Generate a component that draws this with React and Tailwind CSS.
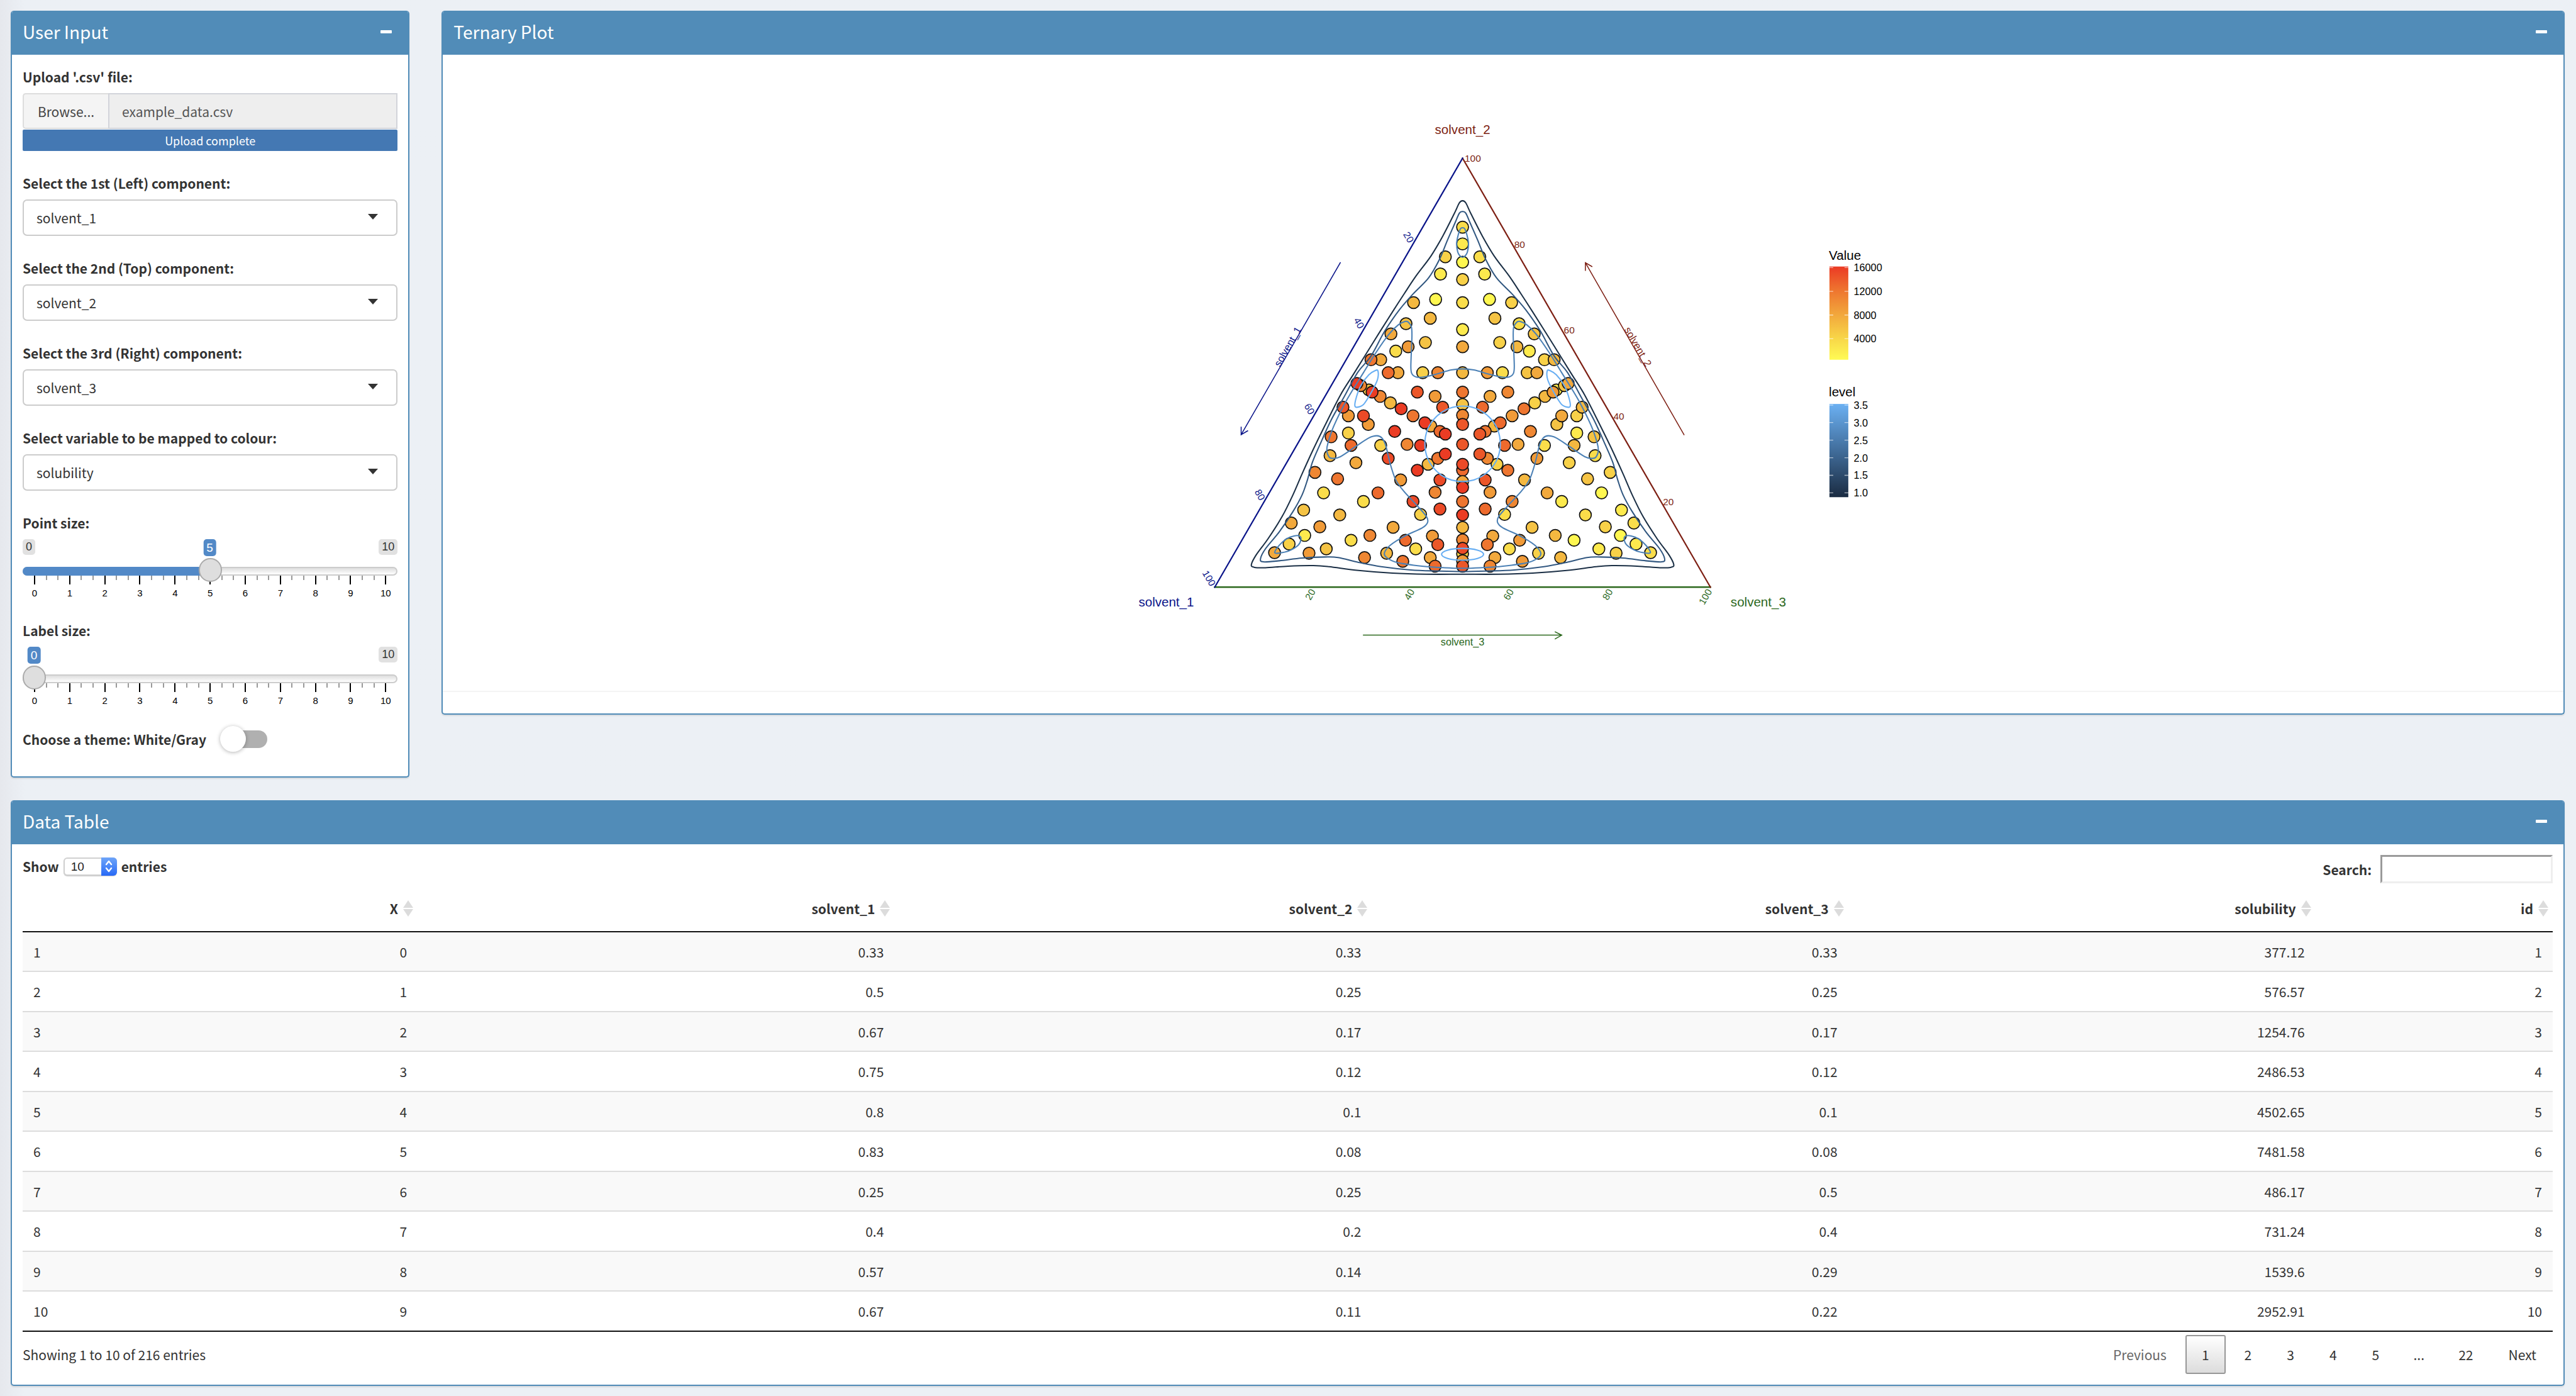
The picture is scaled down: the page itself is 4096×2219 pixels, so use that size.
import React, { useState } from "react";

/* ---------- Ternary plot data ---------- */

const PALETTE = {
  0: "#fff750", 1: "#fdea4d", 2: "#fadd4a", 3: "#f8d148", 4: "#f5c344",
  5: "#f4b840", 6: "#f2a93d", 7: "#f19b38", 8: "#ef8733", 9: "#ee7630",
  A: "#ed6a2d", B: "#ec5729", C: "#ec4a27", D: "#eb3c24",
};

// [y, colour] on the vertical symmetry axis, in drawing order
const AXIS_POINTS = [
  [422, "2"], [453, "1"], [487, "0"], [519, "3"], [562, "2"], [612, "1"],
  [644, "6"], [692, "5"], [728, "9"], [751, "4"], [771, "8"], [788, "B"],
  [825, "B"], [873, "A"], [894, "6"], [862, "C"], [905, "D"], [931, "9"],
  [956, "D"], [979, "5"], [1002, "8"], [1028, "3"], [1018, "C"],
  [1041, "7"], [1051, "B"],
];

// [distance from axis, y, colour on the left, colour on the right]
const PAIRED_POINTS = [
  [32, 477, "3", "2"], [41, 509, "1", "1"], [50, 556, "0", "0"],
  [91, 562, "5", "3"], [60, 591, "5", "4"], [105, 601, "4", "2"],
  [133, 620, "6", "4"], [101, 644, "7", "5"], [124, 652, "2", "1"],
  [69, 636, "4", "3"], [152, 668, "6", "3"], [170, 668, "9", "5"],
  [120, 692, "6", "4"], [138, 692, "A", "6"], [74, 692, "3", "2"],
  [46, 692, "8", "7"], [84, 728, "B", "8"], [51, 736, "7", "6"],
  [37, 756, "B", "A"], [174, 724, "4", "1"], [189, 716, "8", "4"],
  [196, 712, "D", "6"], [153, 736, "8", "5"], [168, 728, "D", "7"],
  [134, 748, "5", "3"], [114, 759, "D", "9"], [92, 772, "9", "7"],
  [59, 791, "6", "5"], [70, 785, "D", "A"], [42, 801, "A", "9"],
  [32, 806, "D", "B"], [212, 772, "7", "3"], [222, 756, "B", "5"],
  [175, 788, "7", "4"], [184, 772, "C", "6"], [126, 801, "D", "8"],
  [212, 804, "3", "1"], [244, 811, "9", "4"], [207, 827, "A", "5"],
  [152, 827, "3", "2"], [103, 825, "8", "6"], [78, 827, "D", "A"],
  [246, 846, "5", "2"], [198, 859, "6", "3"], [138, 851, "C", "7"],
  [64, 862, "5", "3"], [46, 851, "9", "8"], [32, 843, "D", "B"],
  [84, 873, "D", "9"], [274, 877, "8", "3"], [232, 889, "9", "4"],
  [115, 891, "7", "5"], [42, 891, "C", "B"], [258, 915, "2", "0"],
  [157, 915, "A", "6"], [51, 914, "8", "7"], [184, 931, "2", "1"],
  [92, 931, "C", "8"], [42, 945, "C", "A"], [295, 947, "4", "1"],
  [228, 956, "5", "2"], [78, 955, "3", "2"], [318, 971, "6", "2"],
  [265, 978, "7", "3"], [129, 979, "6", "4"], [293, 994, "1", "0"],
  [172, 994, "8", "5"], [56, 995, "7", "6"], [46, 1011, "B", "9"],
  [207, 1003, "2", "0"], [106, 1003, "A", "7"], [322, 1010, "3", "1"],
  [349, 1026, "6", "2"], [285, 1027, "7", "3"], [253, 1019, "4", "1"],
  [87, 1019, "2", "2"], [141, 1027, "5", "3"], [182, 1035, "8", "5"],
  [111, 1042, "9", "7"], [60, 1035, "6", "6"], [51, 1051, "A", "8"],
];

// Left halves of the symmetric density contours, top to bottom
const OUTER = [
  [0, 373], [-6, 377], [-16, 398], [-37, 439], [-59, 476], [-86, 512],
  [-108, 545], [-130, 579], [-166, 636], [-202, 694], [-227, 734],
  [-256, 791], [-277, 834], [-298, 880], [-315, 919], [-335, 959],
  [-361, 1000], [-383, 1030], [-392, 1048], [-387, 1053], [-366, 1054],
  [-324, 1051], [-277, 1050], [-248, 1052], [-193, 1059], [-130, 1064],
  [-67, 1066], [0, 1066],
];
const MIDDLE = [
  [0, 393], [-6, 396], [-14, 414], [-28, 446], [-43, 482], [-63, 516],
  [-92, 546], [-117, 575], [-144, 614], [-170, 661], [-195, 692],
  [-220, 737], [-244, 780], [-265, 826], [-279, 859], [-288, 891],
  [-298, 919], [-315, 950], [-340, 987], [-366, 1019], [-375, 1037],
  [-370, 1043], [-340, 1041], [-298, 1036], [-256, 1034], [-231, 1035],
  [-193, 1044], [-151, 1052], [-96, 1058], [-46, 1060], [0, 1061],
];
const INNER = [
  [0, 685], [-21, 687], [-50, 695], [-72, 700], [-86, 700], [-94, 694],
  [-96, 680], [-94, 625], [-95, 607], [-101, 598], [-107, 597],
  [-119, 603], [-137, 621], [-161, 655], [-184, 692], [-214, 741],
  [-239, 791], [-250, 823], [-252, 837], [-248, 848], [-242, 851],
  [-227, 848], [-197, 828], [-174, 813], [-159, 809], [-150, 813],
  [-143, 826], [-134, 862], [-124, 891], [-109, 912], [-84, 939],
  [-67, 959], [-65, 970], [-75, 980], [-109, 996], [-134, 1012],
  [-145, 1026], [-141, 1035], [-122, 1044], [-75, 1051], [-33, 1054],
  [0, 1055],
];
const TOP_LOOP = [
  [0, 423], [-4, 425], [-8, 436], [-11, 452], [-9, 468], [-5, 475], [0, 478],
];
const CORNER_LOOP = [
  [-347, 1027], [-348, 1023], [-340, 1012], [-326, 1000], [-313, 995],
  [-303, 995], [-300, 1001], [-305, 1012], [-321, 1022], [-336, 1026],
];
const SIDE_LOOP = [
  [-162, 688], [-157, 689], [-158, 705], [-168, 726], [-183, 750],
  [-195, 756], [-200, 753], [-197, 737], [-189, 716], [-174, 696],
];

const flip = (pts) => pts.map(([x, y]) => [-x, y]);
const whole = (half) => [...half, ...flip(half.slice(1, -1)).reverse()];

// Closed Catmull-Rom curve through the points
function curve(pts) {
  const n = pts.length;
  let d = `M${pts[0][0]} ${pts[0][1]}`;
  for (let i = 0; i < n; i++) {
    const p0 = pts[(i - 1 + n) % n];
    const p1 = pts[i];
    const p2 = pts[(i + 1) % n];
    const p3 = pts[(i + 2) % n];
    d += `C${p1[0] + (p2[0] - p0[0]) / 6} ${p1[1] + (p2[1] - p0[1]) / 6} ${p2[0] - (p3[0] - p1[0]) / 6} ${p2[1] - (p3[1] - p1[1]) / 6} ${p2[0]} ${p2[1]}`;
  }
  return d + "Z";
}

const Dot = ({ x, y, c }) => (
  <circle cx={x} cy={y} r="11" fill={PALETTE[c]} stroke="#111" strokeWidth="2" />
);

const STEPS = [1, 2, 3, 4, 5];

function TernaryPlot() {
  return (
    <svg
      viewBox="822 102 3936 1180"
      className="block h-auto w-full font-['Liberation_Sans',Arial,sans-serif]"
      role="img"
      aria-label="Ternary plot of solvent_1, solvent_2 and solvent_3"
    >
      <defs>
        <linearGradient id="value" x1="0" y1="0" x2="0" y2="1">
          <stop offset="0" stopColor="#eb3a24" />
          <stop offset="0.25" stopColor="#ee742f" />
          <stop offset="0.52" stopColor="#f2a83c" />
          <stop offset="0.77" stopColor="#f8d648" />
          <stop offset="1" stopColor="#fffb54" />
        </linearGradient>
        <linearGradient id="level" x1="0" y1="0" x2="0" y2="1">
          <stop offset="0" stopColor="#6bb0f2" />
          <stop offset="0.5" stopColor="#416d9b" />
          <stop offset="1" stopColor="#1a2b41" />
        </linearGradient>
      </defs>

      <g transform="translate(2715 0)">
        {PAIRED_POINTS.map(([dx, y, l, r], i) => (
          <g key={i}>
            <Dot x={-dx} y={y} c={l} />
            <Dot x={dx} y={y} c={r} />
          </g>
        ))}
        {AXIS_POINTS.map(([y, c], i) => (
          <Dot key={i} x={0} y={y} c={c} />
        ))}

        <g fill="none" strokeWidth="2.4">
          <path d={curve(whole(OUTER))} stroke="#1b2f45" />
          <path d={curve(whole(MIDDLE))} stroke="#315780" />
          <g stroke="#4b80b5">
            <path d={curve(whole(INNER))} />
            <path d={curve(whole(TOP_LOOP))} />
            <path d={curve(CORNER_LOOP)} />
            <path d={curve(flip(CORNER_LOOP))} />
          </g>
          <g stroke="#67aef3">
            <circle cx="0" cy="824" r="70" />
            <path d={curve(SIDE_LOOP)} />
            <path d={curve(flip(SIDE_LOOP))} />
            <ellipse cx="0" cy="1029" rx="39" ry="11" />
          </g>
        </g>

        <g fill="none" strokeLinecap="square">
          <path d="M-460 1090H460" stroke="#2c681d" strokeWidth="3" />
          <path d="M0 294L460 1090" stroke="#7d1f13" strokeWidth="2.6" />
          <path d="M0 294L-460 1090" stroke="#0a1489" strokeWidth="2.6" />
          <g strokeWidth="1.8">
            <path d="M-227 488L-411 807M-411 793V807L-399 800" stroke="#0a1489" />
            <path d="M411 807L228 488M228 502V488L240 495" stroke="#7d1f13" />
            <path d="M-184 1179H184M172 1173L184 1179L172 1186" stroke="#2c681d" />
          </g>
        </g>

        <g fontSize="24" textAnchor="middle">
          <text x="0" y="249" fill="#7d1f13">solvent_2</text>
          <text x="-550" y="1126" fill="#0a1489">solvent_1</text>
          <text x="549" y="1126" fill="#2c681d">solvent_3</text>
        </g>
        <g fontSize="19" textAnchor="middle">
          <text transform="translate(-319 647) rotate(-60)" fill="#0a1489">solvent_1</text>
          <text transform="translate(320 647) rotate(60)" fill="#7d1f13">solvent_2</text>
          <text x="0" y="1198" fill="#2c681d">solvent_3</text>
        </g>
        <g fontSize="18">
          {STEPS.map((k) => (
            <g key={k}>
              <text
                transform={`translate(${-92 * k} ${294 + 159.3 * k}) rotate(60)`}
                x="-5" y="7" textAnchor="end" fill="#0a1489"
              >
                {k * 20}
              </text>
              <text x={92 * (k - 1) + 4} y={301 + 159.3 * (k - 1)} fill="#7d1f13">
                {120 - k * 20}
              </text>
              <text
                transform={`translate(${-460 + 184 * k} 1090) rotate(-60)`}
                x="-5" y="7" textAnchor="end" fill="#2c681d"
              >
                {k * 20}
              </text>
            </g>
          ))}
        </g>
      </g>

      <g fill="#000" fontSize="24">
        <text x="3395" y="482">Value</text>
        <text x="3395" y="736">level</text>
      </g>
      <rect x="3396" y="495" width="35" height="173" fill="url(#value)" />
      <rect x="3396" y="750" width="35" height="173" fill="url(#level)" />
      <g fontSize="19">
        {[16000, 12000, 8000, 4000].map((v, i) => (
          <g key={v}>
            <path d={`M3396 ${497 + 44 * i}h7M3424 ${497 + 44 * i}h7`} stroke="#fff" strokeOpacity="0.6" strokeWidth="1.5" />
            <text x="3441" y={504 + 44 * i}>{v}</text>
          </g>
        ))}
        {["3.5", "3.0", "2.5", "2.0", "1.5", "1.0"].map((v, i) => (
          <g key={v}>
            <path d={`M3396 ${752 + 32.6 * i}h7M3424 ${752 + 32.6 * i}h7`} stroke="#fff" strokeOpacity="0.6" strokeWidth="1.5" />
            <text x="3441" y={759 + 32.6 * i}>{v}</text>
          </g>
        ))}
      </g>
    </svg>
  );
}

/* ---------- Dashboard parts ---------- */

function Box({ title, className = "", children }) {
  return (
    <section className={`overflow-hidden rounded-[5px] border-2 border-t-0 border-[#518cb8] bg-white shadow-[0_2px_2px_rgba(0,0,0,0.1)] ${className}`}>
      <header className="flex h-[70px] items-center justify-between bg-[#518cb8] pr-[26px] pb-[4px] pl-[17px] text-white">
        <h3 className="text-[28px] leading-[34px]">{title}</h3>
        <button type="button" aria-label={`Collapse ${title}`} className="flex h-[34px] items-center">
          <span className="block h-[5px] w-[18px] rounded-[1px] bg-white" />
        </button>
      </header>
      {children}
    </section>
  );
}

const labelClass = "mb-[9px] block leading-[34px] font-bold";

function SelectField({ id, label, value }) {
  return (
    <div className="mb-[34px]">
      <label htmlFor={id} className={labelClass}>{label}</label>
      <div className="relative">
        <select
          id={id}
          defaultValue={value}
          className="block h-[58px] w-full appearance-none rounded-[7px] border-2 border-[#ccc] bg-white pr-[50px] pl-[20px]"
        >
          {["solvent_1", "solvent_2", "solvent_3", "solubility"].map((o) => (
            <option key={o}>{o}</option>
          ))}
        </select>
        <svg viewBox="0 0 16 9" className="pointer-events-none absolute top-[23px] right-[31px] h-[9px] w-[16px]" aria-hidden="true">
          <path d="M0 0h16L8 9z" fill="#333" />
        </svg>
      </div>
    </div>
  );
}

function SliderField({ id, label, initial }) {
  const [value, setValue] = useState(initial);
  const t = value / 10;
  const badge = "rounded-[5px] bg-[#e1e1e1] px-[5px] text-[18px] leading-[25px] text-[#333]";
  return (
    <div className="mb-[32px]">
      <label htmlFor={id} className={labelClass}>{label}</label>
      <div className="relative mb-[3px] flex h-[27px] items-start justify-between font-['Liberation_Sans',Arial,sans-serif]">
        <span className={t === 0 ? `${badge} invisible` : badge}>0</span>
        <span className={badge}>10</span>
        <output
          htmlFor={id}
          className="absolute top-0 -translate-x-1/2 rounded-[5px] bg-[#5289c7] px-[5px] text-[19px] leading-[27px] text-white"
          style={{ left: `calc(18px + (100% - 37px) * ${t})` }}
        >
          {value}
        </output>
      </div>
      <div className="grid">
        <div className="mt-[14px] h-[14px] overflow-hidden rounded-[7px] border-2 border-[#ccc] bg-linear-to-b from-[#dedede] to-white [grid-area:1/1]" />
        <div
          className="mt-[14px] h-[14px] rounded-l-[7px] bg-[#5289c7] [grid-area:1/1]"
          style={{ width: `calc(100% * ${t})` }}
        />
        <div className="mt-[28px] flex justify-between px-[18px] font-['Liberation_Sans',Arial,sans-serif] text-[15px] leading-[20px] text-black [grid-area:1/1]">
          {Array.from({ length: 31 }, (_, i) => (
            <div key={i} className="flex w-[2px] flex-col items-center">
              {i % 3 === 0 ? (
                <>
                  <span className="mb-[4px] h-[14px] w-[2px] bg-black" />
                  <span>{i / 3}</span>
                </>
              ) : (
                <span className="h-[7px] w-[2px] bg-[#999]" />
              )}
            </div>
          ))}
        </div>
        <input
          id={id}
          type="range"
          min="0"
          max="10"
          value={value}
          onChange={(e) => setValue(Number(e.target.value))}
          className="m-0 h-[38px] w-full appearance-none self-start bg-transparent [grid-area:1/1] [&::-webkit-slider-thumb]:h-[38px] [&::-webkit-slider-thumb]:w-[37px] [&::-webkit-slider-thumb]:appearance-none [&::-webkit-slider-thumb]:rounded-full [&::-webkit-slider-thumb]:border-2 [&::-webkit-slider-thumb]:border-[#ababab] [&::-webkit-slider-thumb]:bg-[#dedede]"
        />
      </div>
    </div>
  );
}

function UserInput() {
  return (
    <Box title="User Input" className="col-span-2 self-start">
      <form className="px-[17px] pt-[18px] pb-[40px]" onSubmit={(e) => e.preventDefault()}>
        <div className="mb-[34px]">
          <label htmlFor="csv" className={labelClass}>Upload '.csv' file:</label>
          <div className="flex h-[57px]">
            <label className="flex w-[136px] shrink-0 items-center justify-center rounded-l-[5px] border-2 border-r-0 border-[#ddd] bg-[#f4f4f4] text-[#444]">
              Browse...
              <input id="csv" type="file" accept=".csv" className="sr-only" />
            </label>
            <input
              type="text"
              readOnly
              aria-label="Selected file"
              value="example_data.csv"
              className="min-w-0 flex-1 border-2 border-[#d2d4da] bg-[#eee] px-[20px] text-[#555]"
            />
          </div>
          <div className="mt-px h-[34px] rounded-[2px] bg-[#4478b3] text-center text-[18px] leading-[34px] text-white">
            Upload complete
          </div>
        </div>
        <SelectField id="left" label="Select the 1st (Left) component:" value="solvent_1" />
        <SelectField id="top" label="Select the 2nd (Top) component:" value="solvent_2" />
        <SelectField id="right" label="Select the 3rd (Right) component:" value="solvent_3" />
        <SelectField id="colour" label="Select variable to be mapped to colour:" value="solubility" />
        <SliderField id="point" label="Point size:" initial={5} />
        <SliderField id="labels" label="Label size:" initial={0} />
        <label className="flex h-[38px] items-center gap-[29px] font-bold">
          Choose a theme: White/Gray
          <span className="relative block h-[28px] w-[68px] rounded-full bg-[#b0b0b0]">
            <input type="checkbox" role="switch" className="absolute inset-0 h-full w-full appearance-none" />
            <span className="pointer-events-none absolute top-[-7px] left-[-7px] h-[41px] w-[41px] rounded-full bg-white shadow-[0_1px_6px_rgba(0,0,0,0.3)]" />
          </span>
        </label>
      </form>
    </Box>
  );
}

const COLUMNS = [
  ["X", "w-[10%]"],
  ["solvent_1", "w-[18.85%]"],
  ["solvent_2", "w-[18.87%]"],
  ["solvent_3", "w-[18.82%]"],
  ["solubility", "w-[18.47%]"],
  ["id", "w-[9.38%]"],
];
const ROWS = [
  ["0", "0.33", "0.33", "0.33", "377.12", "1"],
  ["1", "0.5", "0.25", "0.25", "576.57", "2"],
  ["2", "0.67", "0.17", "0.17", "1254.76", "3"],
  ["3", "0.75", "0.12", "0.12", "2486.53", "4"],
  ["4", "0.8", "0.1", "0.1", "4502.65", "5"],
  ["5", "0.83", "0.08", "0.08", "7481.58", "6"],
  ["6", "0.25", "0.25", "0.5", "486.17", "7"],
  ["7", "0.4", "0.2", "0.4", "731.24", "8"],
  ["8", "0.57", "0.14", "0.29", "1539.6", "9"],
  ["9", "0.67", "0.11", "0.22", "2952.91", "10"],
];

function DataTable() {
  const page = "h-[62px] rounded-[3px] border-2 px-[24px]";
  return (
    <Box title="Data Table">
      <div className="px-[17px] pt-[17px] pb-[17px]">
        <div className="flex h-[45px] items-start justify-between font-bold">
          <label className="flex h-[36px] items-center gap-[7px]">
            Show
            <span className="relative block h-[29px] w-[85px]">
              <select
                defaultValue="10"
                className="block h-[29px] w-full appearance-none rounded-[6px] border-2 border-[#d0d0d0] bg-white pl-[10px] font-['Liberation_Sans',Arial,sans-serif] text-[19px] leading-[25px] font-normal text-[#222] shadow-[0_1px_1px_rgba(0,0,0,0.2)]"
              >
                {["10", "25", "50", "100"].map((n) => (
                  <option key={n}>{n}</option>
                ))}
              </select>
              <span className="pointer-events-none absolute top-0 right-0 flex h-[29px] w-[25px] items-center justify-center rounded-r-[6px] bg-linear-to-b from-[#6ea4f8] to-[#2768f6]">
                <svg viewBox="0 0 12 20" className="h-[20px] w-[12px]" fill="none" stroke="#fff" strokeWidth="2.4" strokeLinecap="round" strokeLinejoin="round" aria-hidden="true">
                  <path d="M2 7l4-5 4 5M2 13l4 5 4-5" />
                </svg>
              </span>
            </span>
            entries
          </label>
          <label className="flex items-center gap-[14px]">
            Search:
            <input
              type="search"
              className="h-[45px] w-[274px] border-[3px] border-t-[#9a9a9a] border-r-[#eee] border-b-[#eee] border-l-[#9a9a9a] bg-white px-[6px] font-normal"
            />
          </label>
        </div>

        <table className="mt-[4px] w-full table-fixed border-separate border-spacing-0">
          <thead>
            <tr className="h-[74px]">
              <th className="border-b-2 border-[#111]" aria-label="Row" />
              {COLUMNS.map(([name, width]) => (
                <th key={name} scope="col" className={`border-b-2 border-[#111] p-0 pr-[7px] ${width}`}>
                  <div className="flex items-center justify-end gap-[8px]">
                    {name}
                    <svg viewBox="0 0 16 26" className="h-[26px] w-[16px]" aria-hidden="true">
                      <path d="M8 0l8 12H0zM8 26l8-12H0z" fill="#dcdcdc" />
                    </svg>
                  </div>
                </th>
              ))}
            </tr>
          </thead>
          <tbody>
            {ROWS.map((row, r) => (
              <tr key={r} className="group odd:h-[63px] odd:bg-[#f9f9f9] even:h-[64px]">
                <th scope="row" className="border-b-2 border-[#ddd] p-0 pl-[17px] text-left font-normal group-last:border-[#111]">
                  {r + 1}
                </th>
                {row.map((cell, c) => (
                  <td key={c} className="border-b-2 border-[#ddd] p-0 pr-[17px] text-right group-last:border-[#111]">
                    {cell}
                  </td>
                ))}
              </tr>
            ))}
          </tbody>
        </table>

        <div className="mt-[5px] flex items-center justify-between">
          <p>Showing 1 to 10 of 216 entries</p>
          <nav aria-label="Table pages" className="flex gap-[4px]">
            <button type="button" disabled className={`${page} border-transparent text-[#666]`}>Previous</button>
            <button type="button" aria-current="page" className={`${page} border-[#979797] bg-linear-to-b from-white to-[#dcdcdc]`}>1</button>
            {["2", "3", "4", "5"].map((n) => (
              <button key={n} type="button" className={`${page} border-transparent`}>{n}</button>
            ))}
            <span className="w-[66px] text-center leading-[62px]">...</span>
            <button type="button" className={`${page} border-transparent`}>22</button>
            <button type="button" className={`${page} border-transparent`}>Next</button>
          </nav>
        </div>
      </div>
    </Box>
  );
}

export default function App() {
  return (
    <main className="min-h-screen bg-[#ecf0f5] bg-linear-to-r from-[#e6e8ed] to-[#ecf0f5] to-[40px] pt-[17px] pr-[18px] pb-[16px] pl-[17px] font-['Noto_Sans_CJK_SC',sans-serif] text-[21px] leading-[30px] text-[#333]">
      <div className="mb-[36px] grid grid-cols-12 gap-x-[51px]">
        <UserInput />
        <Box title="Ternary Plot" className="col-span-10 self-start">
          <TernaryPlot />
          <div className="h-[36px] border-t-2 border-[#f4f4f4]" />
        </Box>
      </div>
      <DataTable />
    </main>
  );
}
